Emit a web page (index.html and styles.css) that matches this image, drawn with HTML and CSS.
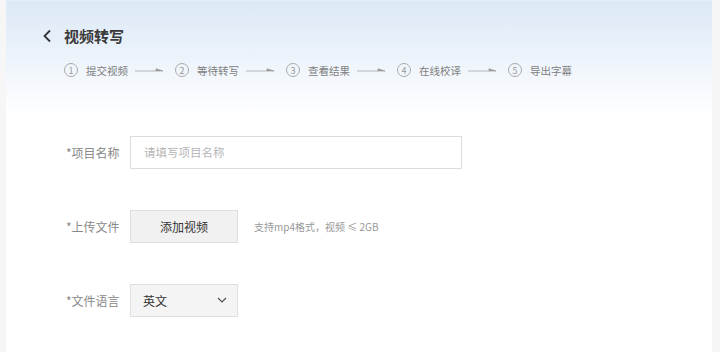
FILE: index.html
```html
<!DOCTYPE html>
<html lang="zh-CN">
<head>
    <meta charset="UTF-8">
    <meta name="viewport" content="width=device-width, initial-scale=1.0">
    <title>视频转写</title>
    <link rel="stylesheet" href="styles.css">
</head>
<body>
    <div class="page">
        <div class="header">
            <svg class="back" width="10" height="14" viewBox="0 0 10 14">
                <path d="M8 1.5 L2.5 7 L8 12.5" fill="none" stroke="#333" stroke-width="1.8"/>
            </svg>
            <h1>视频转写</h1>
        </div>

        <div class="steps">
            <div class="step"><span class="num">1</span>提交视频</div>
            <svg class="arrow" width="28" height="6" viewBox="0 0 28 6"><path d="M0 4 H28 L21 1.8 V4" fill="#999" stroke="#999" stroke-width="0.7"/></svg>
            <div class="step"><span class="num">2</span>等待转写</div>
            <svg class="arrow" width="28" height="6" viewBox="0 0 28 6"><path d="M0 4 H28 L21 1.8 V4" fill="#999" stroke="#999" stroke-width="0.7"/></svg>
            <div class="step"><span class="num">3</span>查看结果</div>
            <svg class="arrow" width="28" height="6" viewBox="0 0 28 6"><path d="M0 4 H28 L21 1.8 V4" fill="#999" stroke="#999" stroke-width="0.7"/></svg>
            <div class="step"><span class="num">4</span>在线校译</div>
            <svg class="arrow" width="28" height="6" viewBox="0 0 28 6"><path d="M0 4 H28 L21 1.8 V4" fill="#999" stroke="#999" stroke-width="0.7"/></svg>
            <div class="step"><span class="num">5</span>导出字幕</div>
        </div>

        <form class="form">
            <div class="row">
                <label for="name">*项目名称</label>
                <input type="text" id="name" placeholder="请填写项目名称">
            </div>
            <div class="row">
                <label>*上传文件</label>
                <button type="button" class="btn">添加视频</button>
                <span class="hint">支持mp4格式，视频 ≤ 2GB</span>
            </div>
            <div class="row">
                <label>*文件语言</label>
                <div class="select">
                    <span>英文</span>
                    <svg width="10" height="6" viewBox="0 0 10 6"><path d="M1 1 L5 5 L9 1" fill="none" stroke="#555" stroke-width="1.2"/></svg>
                </div>
            </div>
        </form>
    </div>
</body>
</html>
```

FILE: styles.css
```css
html, body {
    height: 100%;
}

body {
    margin: 0;
    background-color: #f6f6f6;
    font-family: "Noto Sans CJK SC", "Noto Sans", sans-serif;
    color: #333;
}

.page {
    margin: 0 8px 0 6px;
    min-height: 100%;
    border-top: 1px solid #e6edf5;
    box-sizing: border-box;
    background: linear-gradient(#dde9f7 0, #eaf2fa 50px, #f6f9fd 85px, #fff 115px);
}

.header {
    display: flex;
    align-items: center;
    padding: 25px 0 0 36px;
    height: 20px;
}

.back {
    margin-right: 12px;
}

h1 {
    margin: 0;
    font-size: 15px;
    font-weight: bold;
    line-height: 20px;
    color: #3a3a3a;
}

.steps {
    display: flex;
    align-items: center;
    margin-top: 14px;
    padding-left: 58px;
    height: 20px;
}

.step {
    display: flex;
    align-items: center;
    font-size: 10.5px;
    color: #808080;
}

.num {
    width: 12px;
    height: 12px;
    border: 1px solid #aaa;
    border-radius: 50%;
    display: flex;
    align-items: center;
    justify-content: center;
    font-size: 9px;
    line-height: 1;
    color: #999;
    margin-right: 8px;
}

.arrow {
    margin: 0 12px 0 7px;
}

.form {
    margin-top: 56px;
    padding-left: 60px;
}

.row {
    display: flex;
    align-items: center;
    height: 32px;
    margin-bottom: 42px;
}

label {
    width: 64px;
    font-size: 12px;
    color: #888;
}

input[type=text] {
    width: 332px;
    height: 33px;
    box-sizing: border-box;
    border: 1px solid #dcdcdc;
    padding: 0 13px;
    font-family: inherit;
    font-size: 11.5px;
    outline: none;
}

input::placeholder {
    color: #b5b5b5;
}

.btn {
    width: 108px;
    height: 33px;
    background-color: #f1f1f1;
    border: 1px solid #dedede;
    font-family: inherit;
    font-size: 12px;
    color: #333;
    cursor: pointer;
}

.hint {
    margin-left: 16px;
    font-size: 10px;
    color: #999;
}

.select {
    width: 108px;
    height: 33px;
    box-sizing: border-box;
    background-color: #f4f4f4;
    border: 1px solid #e0e0e0;
    display: flex;
    align-items: center;
    justify-content: space-between;
    padding: 0 10px 0 12px;
    font-size: 12px;
    color: #333;
}
```
